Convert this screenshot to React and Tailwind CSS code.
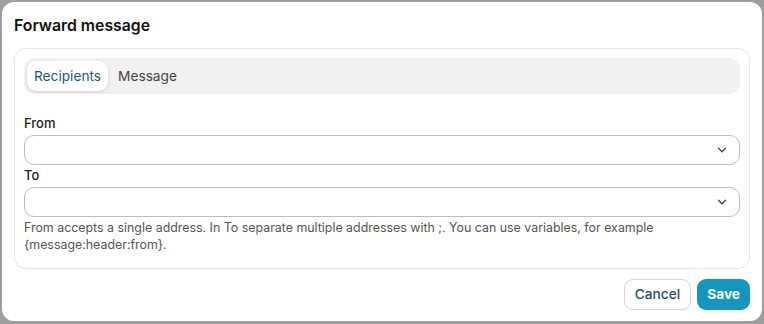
import React from 'react';

function Chevron() {
  return (
    <svg width="14" height="14" viewBox="0 0 24 24" fill="none" stroke="#444" strokeWidth="2.2" strokeLinecap="round" strokeLinejoin="round">
      <path d="M6 9l6 6 6-6" />
    </svg>
  );
}

function SelectBox() {
  return (
    <div className="flex h-[30px] w-full items-center justify-end rounded-[10px] border border-[#bdbdbd] bg-white pr-[10px]">
      <Chevron />
    </div>
  );
}

export default function App() {
  return (
    <div className="h-[324px] w-[764px] bg-[#9e9e9e] p-[2px]" style={{ fontFamily: 'Inter, "Noto Sans", sans-serif' }}>
      <div className="flex h-[319px] w-[760px] flex-col rounded-[12px] bg-white px-[12px]">
        <h1 className="pt-[14px] pb-[12px] text-[15.8px] font-semibold leading-[20px] text-[#111]">Forward message</h1>

        <div className="rounded-[12px] border border-[#e6e6e6] px-[9px] pt-[9px] pb-[15px]">
          <div className="flex h-[36px] items-center gap-[4px] rounded-[10px] bg-[#f1f1f1] px-[3px]">
            <div className="flex h-[30px] items-center rounded-[9px] bg-white px-[7px] text-[13.7px] text-[#1c5a78] shadow-[0_1px_3px_rgba(0,0,0,0.15)]">
              Recipients
            </div>
            <div className="flex h-[30px] items-center px-[6px] text-[13.7px] text-[#444]">Message</div>
          </div>

          <div className="pt-[20px] text-[13px] font-medium leading-[18px] text-[#222]">From</div>
          <div className="mt-[3px]">
            <SelectBox />
          </div>
          <div className="mt-[1px] text-[13px] font-medium leading-[18px] text-[#222]">To</div>
          <div className="mt-[3px]">
            <SelectBox />
          </div>
          <p className="mt-[2px] text-[12.4px] leading-[17px] text-[#555]">
            From accepts a single address. In To separate multiple addresses with ;. You can use variables, for example {'{message:header:from}'}.
          </p>
        </div>

        <div className="mt-[10px] flex justify-end gap-[6px]">
          <button className="h-[31px] rounded-[9px] border border-[#d4d4d4] bg-white px-[10px] text-[13.7px] font-medium text-[#1c4f6b]">
            Cancel
          </button>
          <button className="h-[31px] rounded-[9px] bg-[#1596bf] px-[10px] text-[13.7px] font-bold text-white">
            Save
          </button>
        </div>
      </div>
    </div>
  );
}
